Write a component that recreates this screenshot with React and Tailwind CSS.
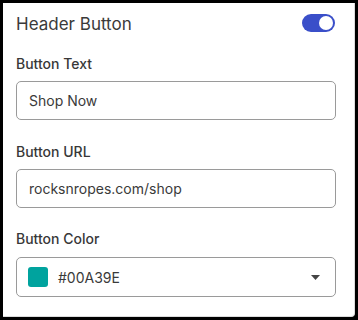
export default function App() {
  return (
    <div className="w-[358px] h-[320px] bg-black p-[3px]" style={{ fontFamily: "Inter, 'Noto Sans', sans-serif" }}>
      <div className="w-[352px] h-[314px] bg-white rounded-br-[4px] border-r border-b border-[#dcdcdc] flex flex-col px-[13px] pt-[9px] text-[#333333]">
        <div className="h-[24px] flex items-center justify-between">
          <span className="text-[17px] leading-[24px] text-[#3a3a3a]">Header Button</span>
          <div className="w-[33px] h-[18px] rounded-full bg-[#3a4fc9] flex items-center justify-end pr-[2px] mr-[6px] -mt-[3px]">
            <div className="w-[14px] h-[14px] rounded-full bg-white"></div>
          </div>
        </div>

        <label className="mt-[18px] text-[14px] leading-5 font-medium text-[#383838]">Button Text</label>
        <div className="mt-[7px] h-[39px] w-[320px] border border-[#9a9a9a] rounded-[5px] flex items-center px-[12px] text-[14px] text-[#3a3a3a]">
          Shop Now
        </div>

        <label className="mt-[22px] text-[14px] leading-5 font-medium text-[#383838]">Button URL</label>
        <div className="mt-[7px] h-[39px] w-[320px] border border-[#9a9a9a] rounded-[5px] flex items-center px-[12px] text-[14px] text-[#3a3a3a]">
          rocksnropes.com/shop
        </div>

        <label className="mt-[21px] text-[14px] leading-5 font-medium text-[#383838]">Button Color</label>
        <div className="mt-[8px] h-[40px] w-[320px] border border-[#9a9a9a] rounded-[5px] flex items-center pl-[11px] pr-[15px] text-[14px] text-[#3a3a3a]">
          <div className="w-[20px] h-[20px] rounded-[3px] bg-[#00A39E]"></div>
          <span className="ml-[10px]">#00A39E</span>
          <svg className="ml-auto" width="9" height="5" viewBox="0 0 9 5">
            <path d="M0 0 L9 0 L4.5 5 Z" fill="#444444" />
          </svg>
        </div>
      </div>
    </div>
  );
}
